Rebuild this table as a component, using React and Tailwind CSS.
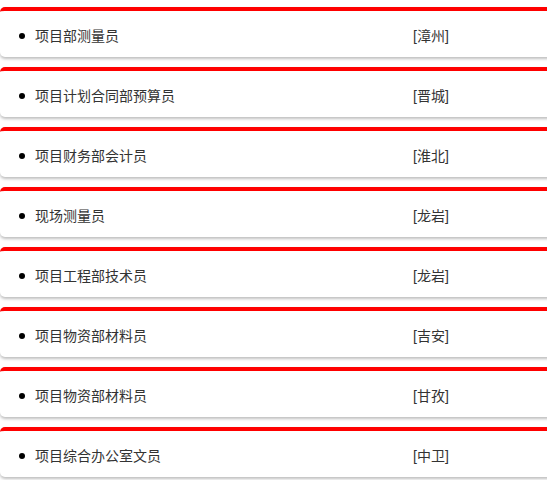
import React from "react";

const jobs = [
  { title: "项目部测量员", city: "漳州" },
  { title: "项目计划合同部预算员", city: "晋城" },
  { title: "项目财务部会计员", city: "淮北" },
  { title: "现场测量员", city: "龙岩" },
  { title: "项目工程部技术员", city: "龙岩" },
  { title: "项目物资部材料员", city: "吉安" },
  { title: "项目物资部材料员", city: "甘孜" },
  { title: "项目综合办公室文员", city: "中卫" },
];

export default function App() {
  return (
    <div
      className="w-[547px] h-[480px] overflow-hidden bg-white pt-[7px]"
      style={{ fontFamily: '"Liberation Sans", "Noto Sans CJK SC", sans-serif' }}
    >
      <ul className="w-[556px] flex flex-col gap-[10px]">
        {jobs.map((job, i) => (
          <li
            key={i}
            className="h-[50px] bg-white border-t-[4px] border-[#ff0000] rounded-[5px] shadow-[0_2px_3px_rgba(0,0,0,0.25)] flex items-center pt-[4px] text-[14px] text-[#333333]"
          >
            <span className="w-[6px] h-[6px] rounded-full bg-black ml-[19px] mr-[10px]" />
            <span className="w-[378px]">{job.title}</span>
            <span>[{job.city}]</span>
          </li>
        ))}
      </ul>
    </div>
  );
}
